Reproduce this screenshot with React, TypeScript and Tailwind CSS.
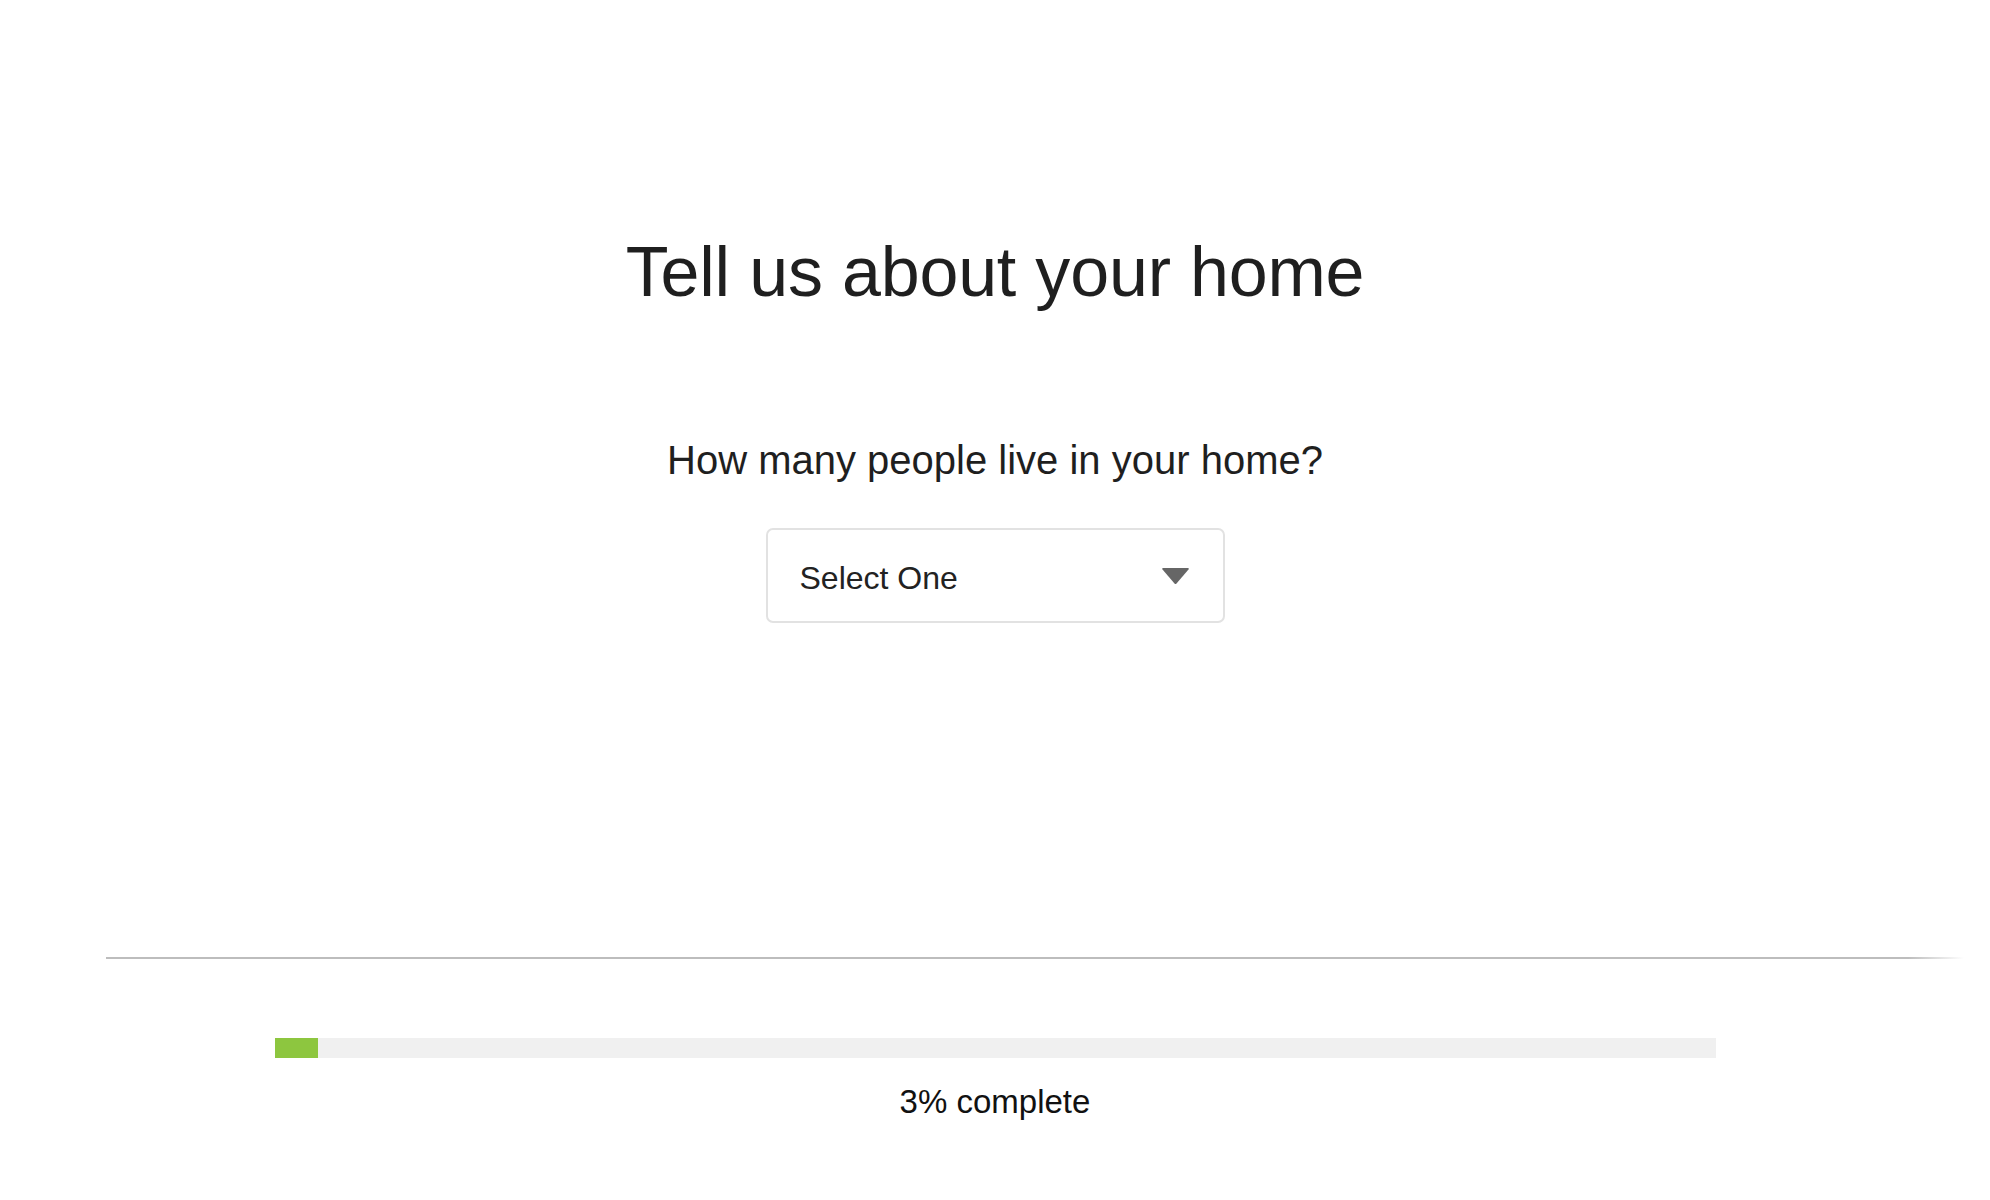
import { useState } from 'react';

const PROGRESS = 3;

export default function App() {
  const [value, setValue] = useState('');

  return (
    <div className="min-h-screen bg-white text-[#1f1f1f] font-['Liberation_Sans',Arial,sans-serif]">
      {/* ── QUESTION ─────────────────────────────────────────── */}
      <section className="flex flex-col items-center pt-[233px]">
        <h1 className="text-[70px] leading-[78px] font-normal tracking-[-0.2px]">
          Tell us about your home
        </h1>

        <label htmlFor="people" className="mt-[126px] text-[40px] leading-[46px]">
          How many people live in your home?
        </label>

        <div className="relative mt-[45px] w-[459px]">
          <select
            id="people"
            value={value}
            onChange={(e) => setValue(e.target.value)}
            className="appearance-none w-full h-[95px] border-2 border-[#e2e2e2] rounded-[7px] bg-white pl-[32px] pr-16 pt-[4px] text-[32px] text-[#222] focus:outline-none"
          >
            <option value="">Select One</option>
            <option value="1">1</option>
            <option value="2">2</option>
            <option value="3">3</option>
            <option value="4">4</option>
            <option value="5">5+</option>
          </select>
          <svg
            className="absolute right-[35px] top-[39px] pointer-events-none"
            width="29"
            height="18"
            viewBox="0 0 29 18"
          >
            <path d="M2 1 H27 Q28.5 1 27.5 2.5 L15.5 16.5 Q14.5 17.6 13.5 16.5 L1.5 2.5 Q0.5 1 2 1 Z" fill="#666666" />
          </svg>
        </div>
      </section>

      {/* ── FOOTER / PROGRESS ───────────────────────────────── */}
      <div className="mt-[334px] ml-[106px] mr-[26px] h-[2px] bg-gradient-to-r from-[#bdbdbd] from-97% to-white" />

      <div className="mt-[79px] mx-auto w-[1441px] h-[20px] bg-[#f0f0f0]">
        <div className="h-full bg-[#8dc63f]" style={{ width: `${PROGRESS}%` }} />
      </div>

      <p className="mt-[24px] text-center text-[33px] leading-[40px] text-[#111]">
        3% complete
      </p>
    </div>
  );
}
